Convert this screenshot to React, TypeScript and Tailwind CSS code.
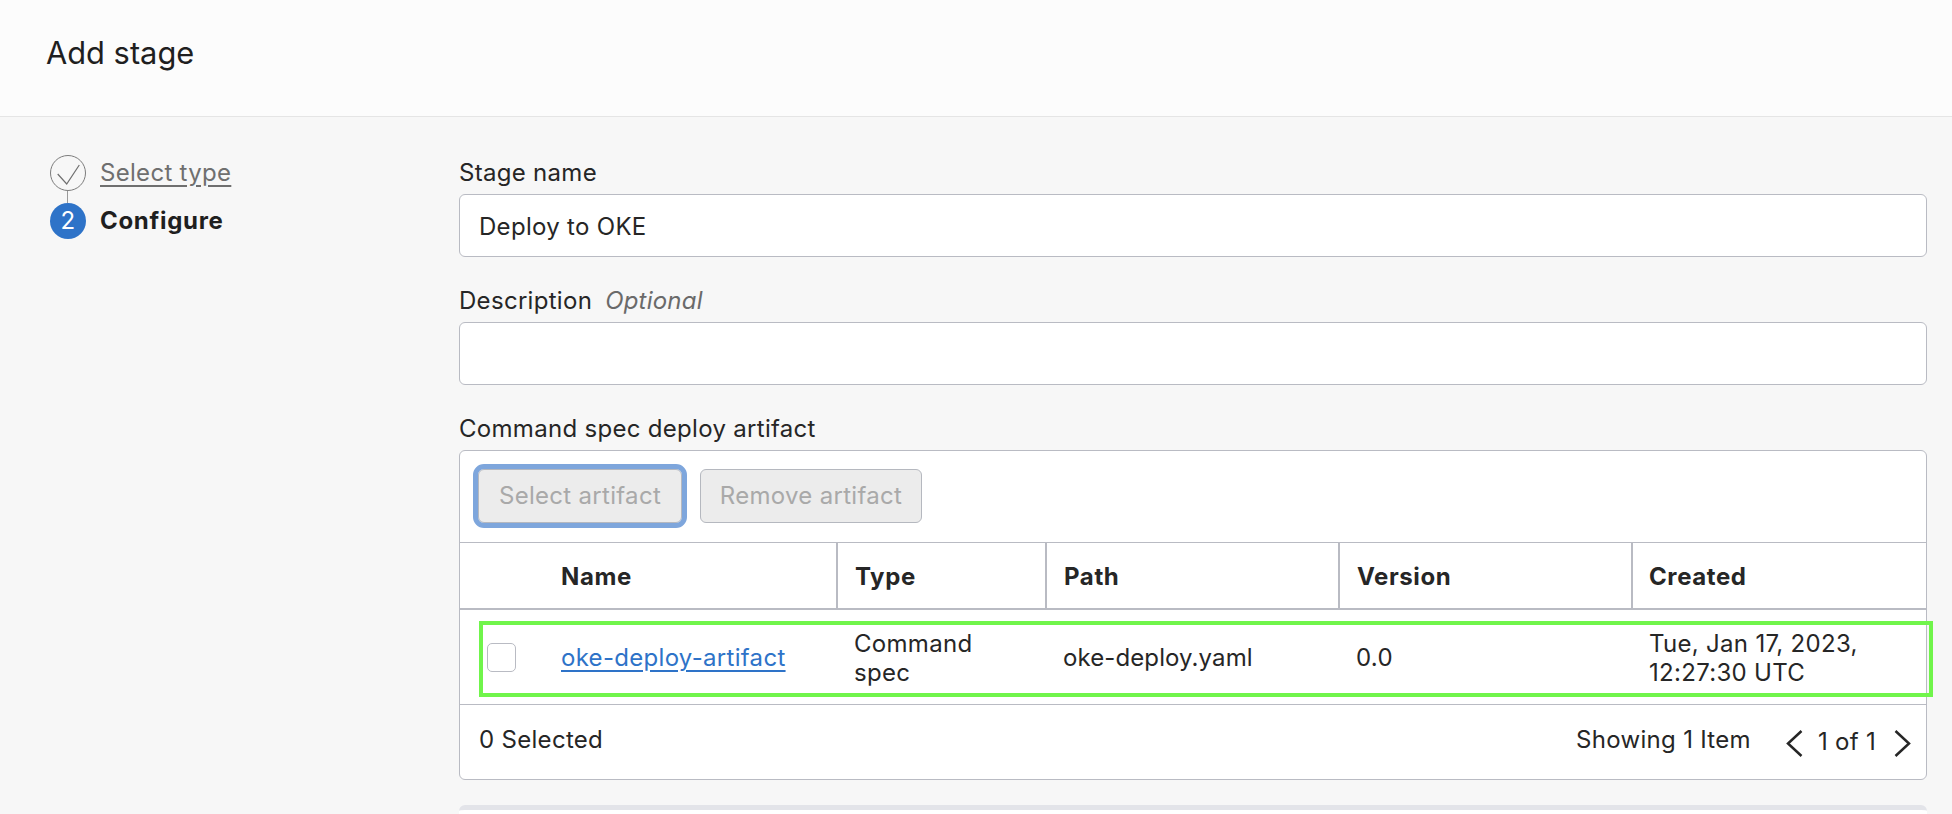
const columns = ["Name", "Type", "Path", "Version", "Created"];

function Field({
  label,
  optional,
  children,
}: {
  label: string;
  optional?: boolean;
  children: React.ReactNode;
}) {
  return (
    <div className="mb-[25px]">
      <div className="flex h-10 items-center pb-0.5">
        <span>{label}</span>
        {optional ? (
          <span className="ml-[13px] italic tracking-[0.2px] text-[#6a6a6a]">Optional</span>
        ) : null}
      </div>
      {children}
    </div>
  );
}

function TextBox({ value }: { value?: string }) {
  return (
    <div className="flex h-[63px] items-center rounded-md border border-[#b9bbc3] bg-white px-[19px] pt-0.5">
      {value}
    </div>
  );
}

export default function App() {
  return (
    <div className="h-[814px] overflow-hidden bg-[#f7f7f7] font-['Inter',sans-serif] text-[24px] tracking-[0.3px] text-[#262626]">
      <header className="flex h-[117px] items-center border-b border-[#e5e5e5] bg-[#fcfcfc] pb-[9px] pl-[46px]">
        <h1 className="text-[30.8px] tracking-normal text-[#1f1f1f]">Add stage</h1>
      </header>
      <div className="flex">
        <nav className="w-[459px] shrink-0 pl-[50px] pt-[38px]">
          <div className="flex items-center gap-[14px]">
            <svg width="36" height="36" viewBox="0 0 36 36" fill="none">
              <circle cx="18" cy="18" r="17.5" stroke="#7c7c7c" />
              <path d="M7.7 19 L16.7 29 L29.3 10" stroke="#6f6f6f" strokeWidth="1.2" />
            </svg>
            <a href="#" className="text-[#6f6f6f] underline underline-offset-4">
              Select type
            </a>
          </div>
          <div className="ml-[17px] h-3 w-px bg-[#9a9a9a]" />
          <div className="flex items-center gap-[14px]">
            <div className="flex h-9 w-9 items-center justify-center rounded-full bg-[#2e73c8] text-white">
              2
            </div>
            <span className="font-bold tracking-[0.7px] text-[#1f1f1f]">Configure</span>
          </div>
        </nav>
        <main className="w-[1468px] pt-[37px]">
          <Field label="Stage name">
            <TextBox value="Deploy to OKE" />
          </Field>
          <Field label="Description" optional>
            <TextBox />
          </Field>
          <Field label="Command spec deploy artifact">
            <div className="rounded-md border border-[#b9bbc3] bg-white">
              <div className="flex h-[92px] items-center gap-[18px] border-b border-[#b9bbc3] pb-px pl-[18px]">
                <button className="flex h-[54px] w-[204px] items-center justify-center rounded-md border border-[#b5b8bf] bg-[#ececec] text-[#a9a9a9] outline-[5px] outline-[#7ea6dc]">
                  Select artifact
                </button>
                <button className="flex h-[54px] w-[222px] items-center justify-center rounded-md border border-[#b5b8bf] bg-[#ececec] text-[#a9a9a9]">
                  Remove artifact
                </button>
              </div>
              <div className="grid h-[67px] grid-cols-[378px_209px_293px_293px_1fr] border-b-2 border-[#b9bbc3] font-bold tracking-[0.6px]">
                {columns.map((col, i) => (
                  <div
                    key={col}
                    className={
                      i === 0
                        ? "flex items-center border-r-2 border-[#b9bbc3] pl-[101px] pt-[3px]"
                        : i === 4
                          ? "flex items-center pl-4 pt-[3px]"
                          : "flex items-center border-r-2 border-[#b9bbc3] pl-[17px] pt-[3px]"
                    }
                  >
                    {col}
                  </div>
                ))}
              </div>
              <div className="relative grid h-[95px] grid-cols-[378px_209px_293px_293px_1fr] items-center border-b border-[#b9bbc3] pt-px leading-[29px]">
                <div className="flex items-center pl-[27px]">
                  <div className="h-[29px] w-[29px] rounded-[5px] border border-[#b9bbc3] bg-white" />
                  <a href="#" className="ml-[45px] text-[#2e73c8] underline underline-offset-4">
                    oke-deploy-artifact
                  </a>
                </div>
                <div className="pl-4 pr-8">Command spec</div>
                <div className="pl-4 tracking-[0.1px]">oke-deploy.yaml</div>
                <div className="pl-4">0.0</div>
                <div className="pl-4 pr-2">Tue, Jan 17, 2023, 12:27:30 UTC</div>
                <div className="absolute -right-[7px] left-[19px] top-[11px] h-[76px] border-4 border-[#70f54b]" />
              </div>
              <div className="flex h-[74px] items-center justify-between pb-[4px] pl-[19px] pr-[15px]">
                <span>0 Selected</span>
                <div className="flex items-center">
                  <span>Showing 1 Item</span>
                  <svg className="ml-[35px] mt-1.5" width="17" height="27" viewBox="0 0 17 27" fill="none" stroke="#262626" strokeWidth="2.5">
                    <path d="M15.5 1 L2 13.5 L15.5 26" />
                  </svg>
                  <span className="ml-[15px] mt-1">1 of 1</span>
                  <svg className="ml-[18px] mt-1.5" width="17" height="27" viewBox="0 0 17 27" fill="none" stroke="#262626" strokeWidth="2.5">
                    <path d="M1.5 1 L15 13.5 L1.5 26" />
                  </svg>
                </div>
              </div>
            </div>
          </Field>
          <div className="h-[40px] rounded-t-md border-t-[5px] border-[#e3e4e9] bg-white" />
        </main>
      </div>
    </div>
  );
}
